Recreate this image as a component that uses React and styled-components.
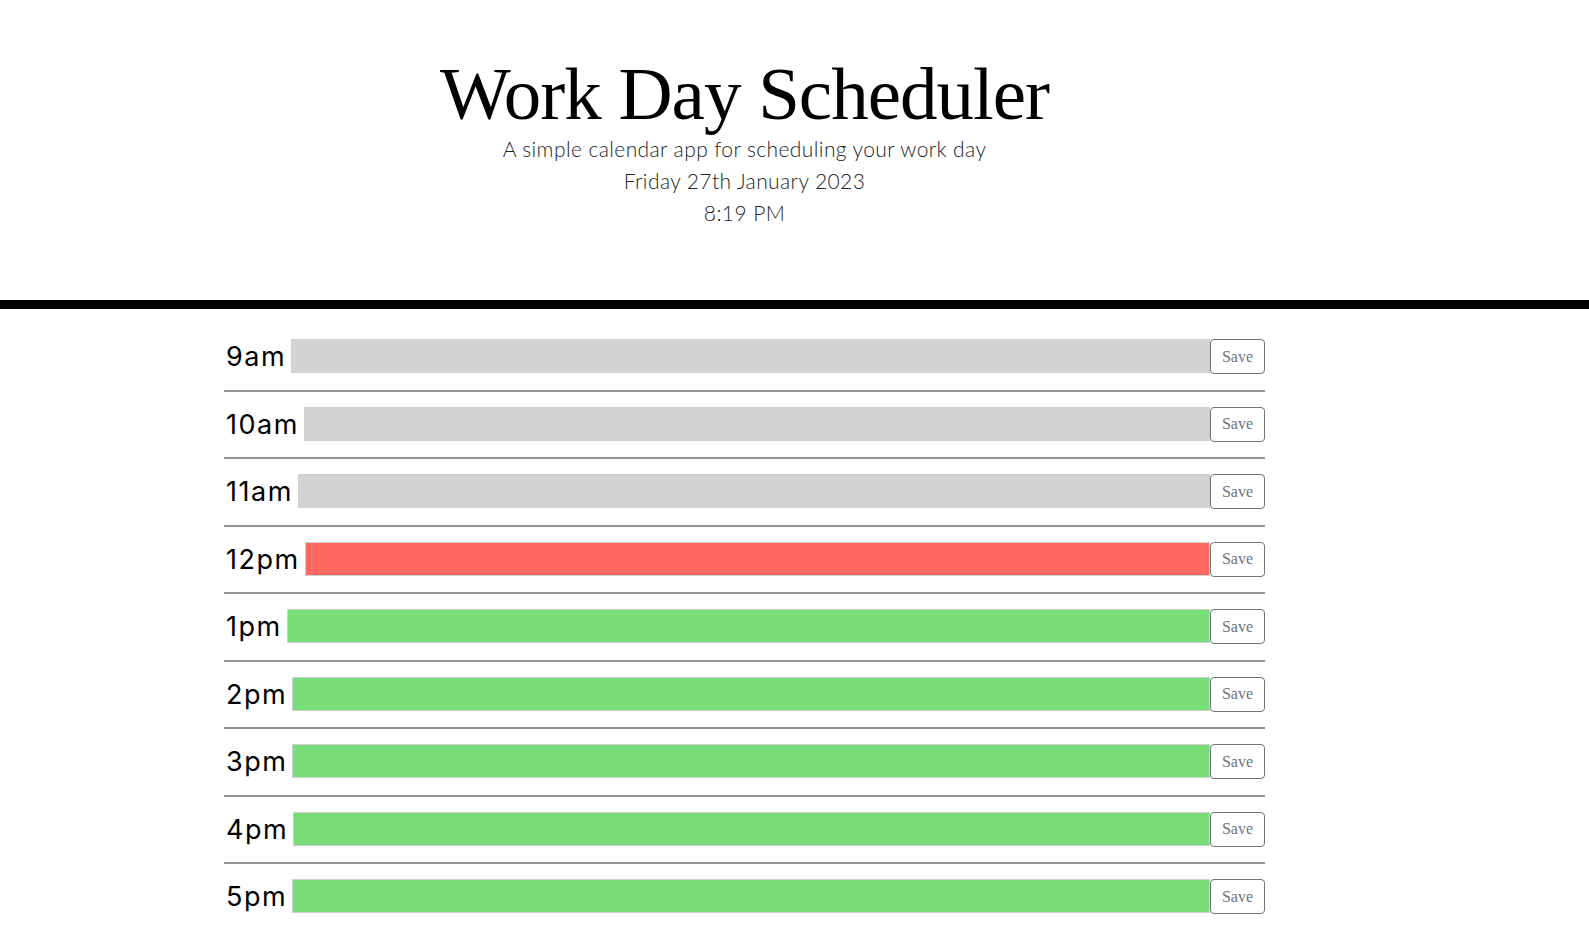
import React from 'react';
import styled, { createGlobalStyle } from 'styled-components';

const hours = [
  { label: '9am', state: 'past' },
  { label: '10am', state: 'past' },
  { label: '11am', state: 'past' },
  { label: '12pm', state: 'present' },
  { label: '1pm', state: 'future' },
  { label: '2pm', state: 'future' },
  { label: '3pm', state: 'future' },
  { label: '4pm', state: 'future' },
  { label: '5pm', state: 'future' }
];

const slotColors = {
  past: '#d3d3d3',
  present: '#ff6961',
  future: '#77dd77'
};

const GlobalStyle = createGlobalStyle`
  body {
    margin: 0;
    background: #fff;
    font-family: Inter, "Noto Sans", sans-serif;
  }
`;

const Page = styled.div`
  padding-right: 100px;
`;

const Header = styled.header`
  padding: 67px 100px 71px 0;
  margin-right: -100px;
  text-align: center;
  border-bottom: 9px solid #000;
`;

const Title = styled.h1`
  margin: 0 0 12px;
  font-family: "Liberation Serif", serif;
  font-weight: 400;
  font-size: 75px;
  letter-spacing: -1px;
  line-height: 54px;
  color: #000;
`;

const Lead = styled.p`
  margin: 0;
  font-family: Lato, Inter, sans-serif;
  font-weight: 300;
  font-size: 21px;
  letter-spacing: 0.4px;
  line-height: 32px;
  color: #212529;
`;

const Schedule = styled.main`
  width: 1041px;
  margin: 0 auto;
  padding-top: 15px;
`;

const Row = styled.div`
  display: flex;
  align-items: flex-start;
  padding: 15px 0 15.5px;
  border-bottom: 2px solid #949494;
`;

const Hour = styled.div`
  align-self: center;
  padding-left: 2px;
  margin-right: 5px;
  font-size: 27px;
  font-weight: 400;
  letter-spacing: 1.5px;
  color: #000;
`;

const Slot = styled.textarea`
  flex: 1;
  height: 34px;
  box-sizing: border-box;
  margin: 0;
  padding: 4px 8px;
  resize: none;
  border: 1px solid #cfcfcf;
  background: ${(p) => slotColors[p.$state]};
  font-family: Inter, sans-serif;
  font-size: 16px;
`;

const SaveButton = styled.button`
  width: 55px;
  height: 35px;
  box-sizing: border-box;
  padding: 0;
  border: 1px solid #6c757d;
  border-radius: 4px;
  background: #fff;
  color: #6c757d;
  font-family: "Liberation Serif", serif;
  font-size: 16px;
  cursor: pointer;
`;

export default function App() {
  return (
    <Page>
      <GlobalStyle />
      <Header>
        <Title>Work Day Scheduler</Title>
        <Lead>A simple calendar app for scheduling your work day</Lead>
        <Lead>Friday 27th January 2023</Lead>
        <Lead>8:19 PM</Lead>
      </Header>
      <Schedule>
        {hours.map((h) => (
          <Row key={h.label}>
            <Hour>{h.label}</Hour>
            <Slot $state={h.state} />
            <SaveButton>Save</SaveButton>
          </Row>
        ))}
      </Schedule>
    </Page>
  );
}
